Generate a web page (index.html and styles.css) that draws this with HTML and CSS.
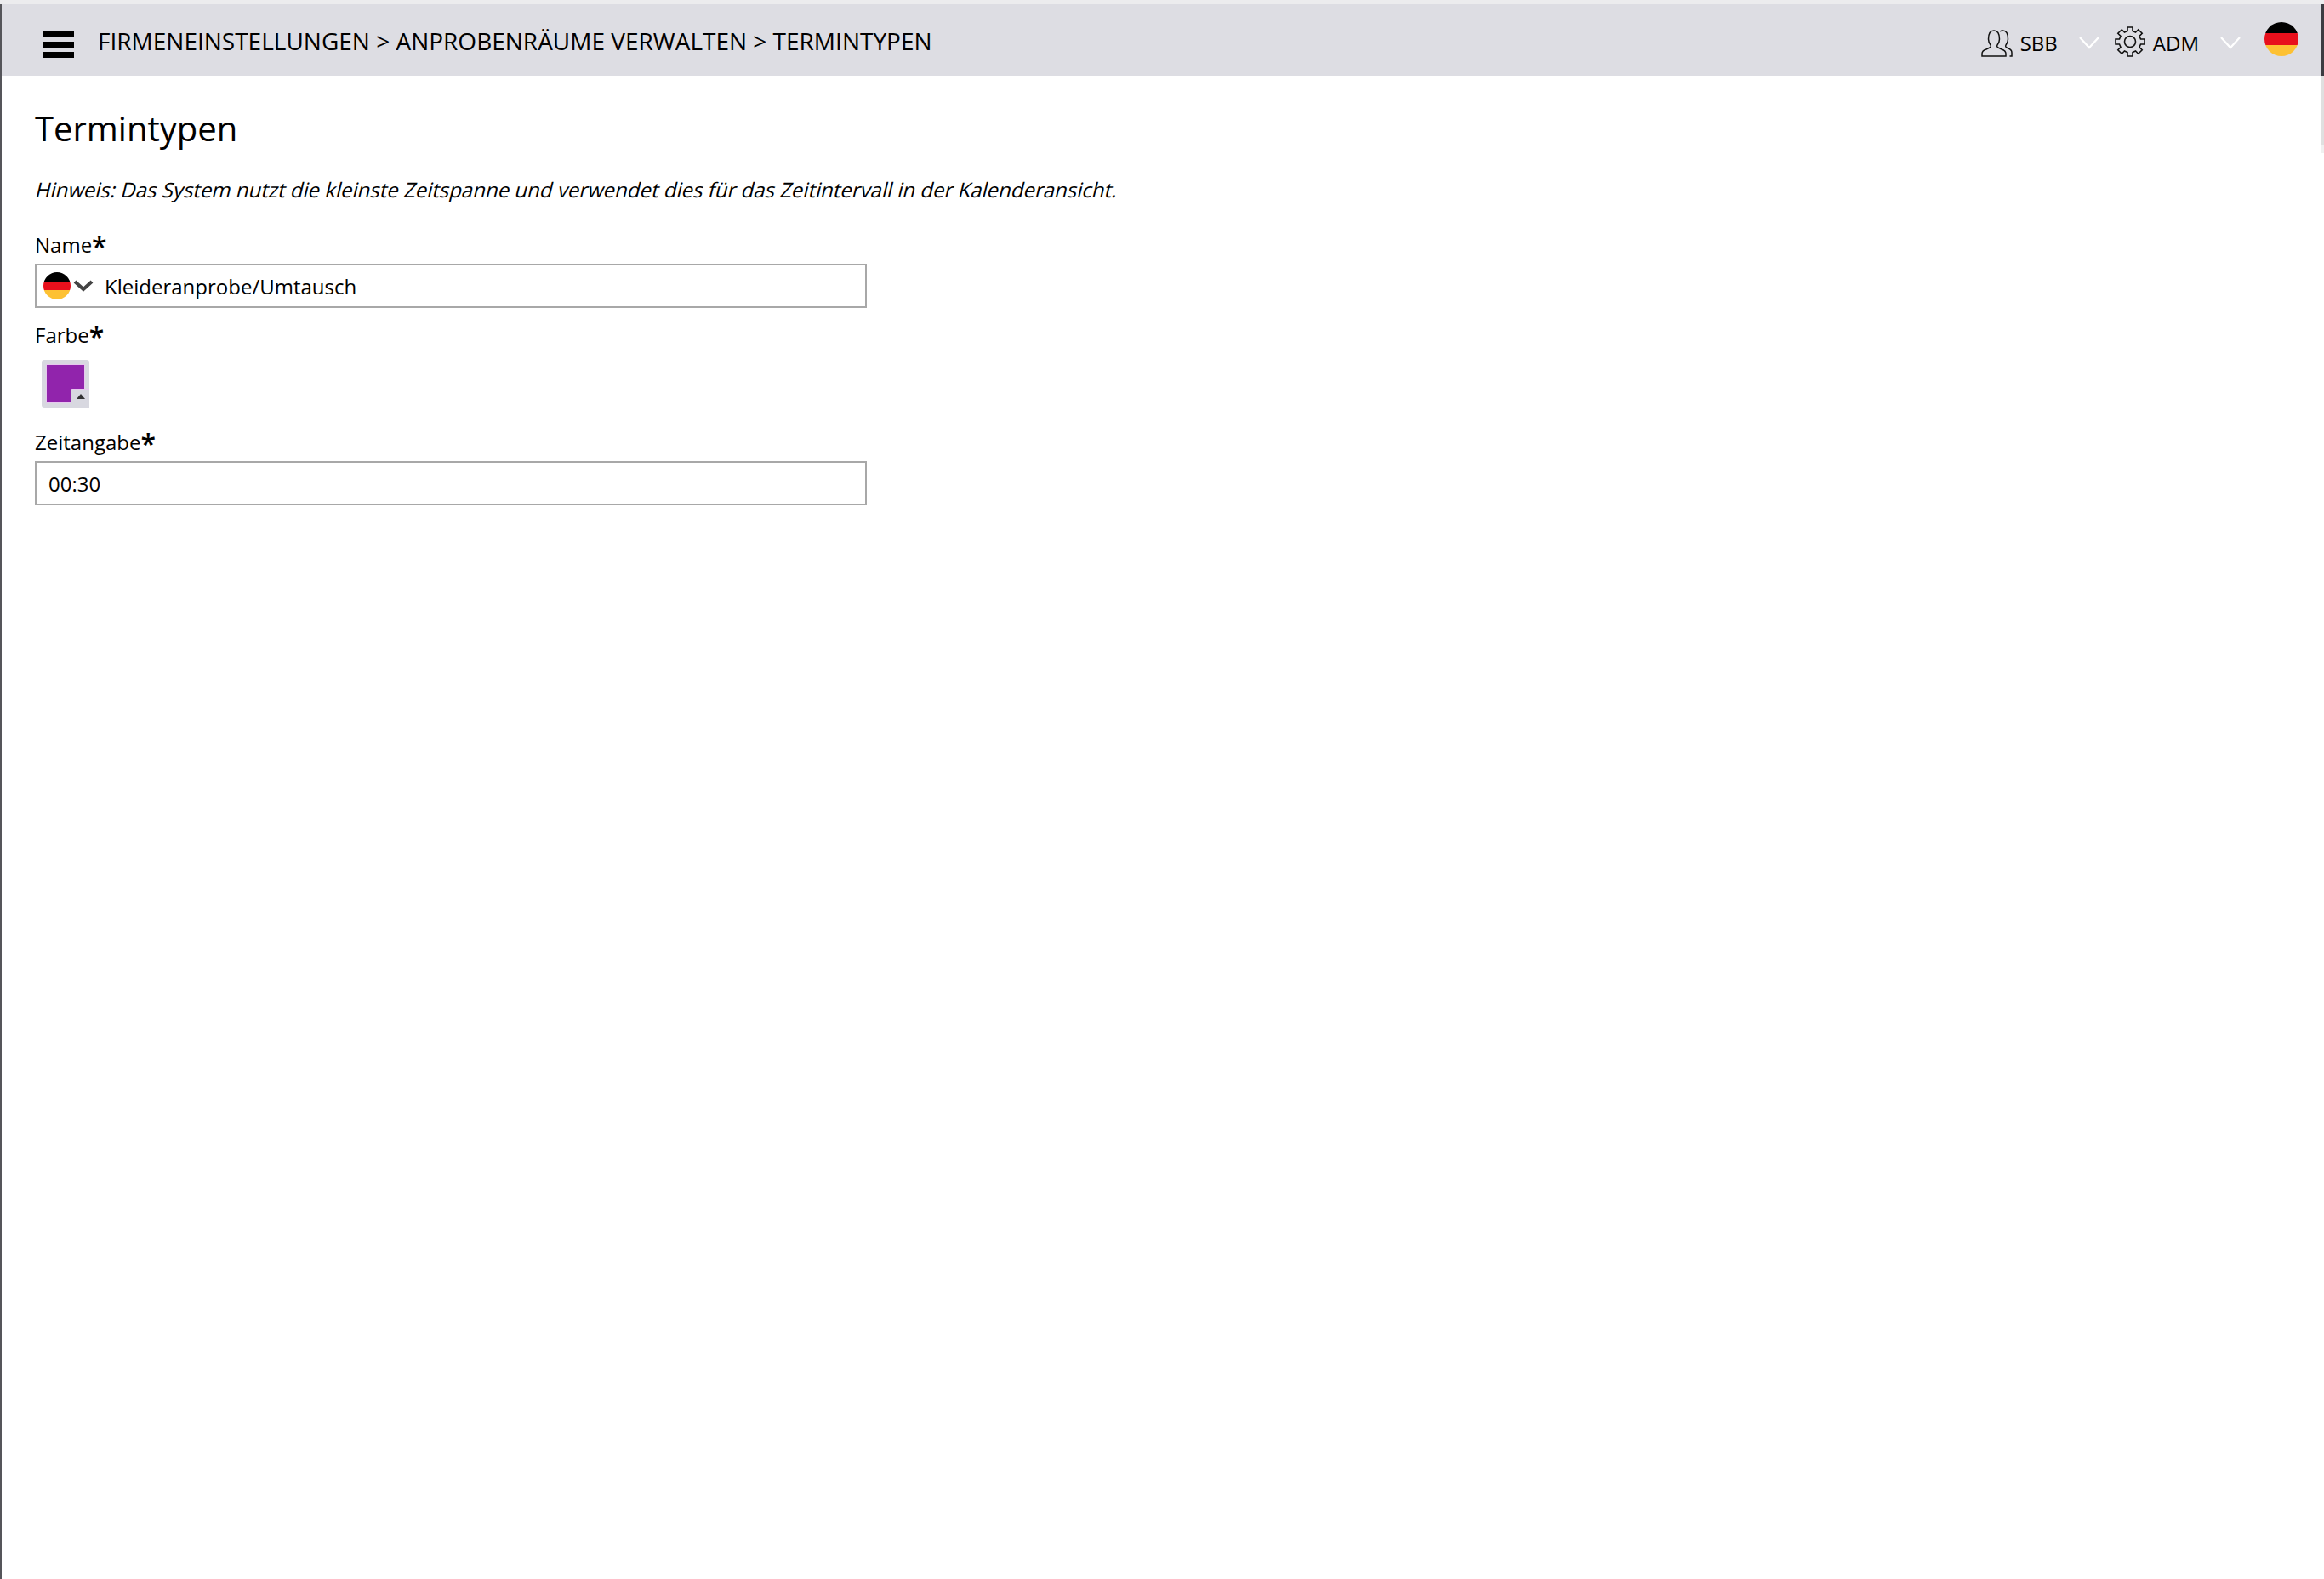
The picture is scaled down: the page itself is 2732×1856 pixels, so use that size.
FILE: index.html
```html
<!DOCTYPE html>
<html lang="de">
<head>
    <meta charset="UTF-8">
    <title>Termintypen</title>
    <link rel="stylesheet" href="styles.css">
</head>
<body>
    <div id="top-strip"></div>
    <div id="page">
        <!-- Top bar -->
        <div id="top-bar">
            <div class="hamburger"><span></span><span></span><span></span></div>
            <div id="breadcrumb">FIRMENEINSTELLUNGEN &gt; ANPROBENRÄUME VERWALTEN &gt; TERMINTYPEN</div>
            <div id="top-menu">
                <svg class="icon-users" viewBox="0 0 37 32" fill="none" stroke="#111" stroke-width="1.500">
                    <path d="M1 31v-3c0-3 2-4 5-5l4-2c1.500-.7 1.500-2 1-3-1.500-2-2.500-4-2.500-7C8.500 6 10 1 15 1s6.500 5 6.500 10c0 3-1 5-2.500 7-.5 1-.5 2.300 1 3l4 2c3 1 5 2 5 5v3z"/>
                    <path d="M22 2c1-.7 2-1 3.500-1 5 0 6 5 6 10 0 3-1 5-2.500 7-.5 1-.5 2.300 1 3l2 1c3 1 4 2.500 4 5v4h-2.500"/>
                </svg>
                <span class="menu-label">SBB</span>
                <svg class="chevron-light" viewBox="0 0 24 15" fill="none" stroke="#fff" stroke-width="2.200"><path d="M1 1l11 12L23 1"/></svg>
                <svg class="icon-gear" viewBox="0 0 36 36" fill="none" stroke="#111" stroke-width="1.600">
                    <circle cx="18" cy="18" r="6.500"/>
                    <path d="M15 1h6v4.500l3.500 1.500 3.200-3.200 4.500 4.500-3.200 3.200 1.500 3.500H35v6h-4.500L29 24.500l3.200 3.200-4.500 4.500-3.200-3.200-3.500 1.500V35h-6v-4.500L11.500 29l-3.200 3.200-4.500-4.500L7 24.500 5.500 21H1v-6h4.500L7 11.500 3.800 8.300l4.500-4.500L11.500 7 15 5.500z"/>
                </svg>
                <span class="menu-label">ADM</span>
                <svg class="chevron-light" viewBox="0 0 24 15" fill="none" stroke="#fff" stroke-width="2.200"><path d="M1 1l11 12L23 1"/></svg>
                <div class="flag flag-large"></div>
            </div>
        </div>

        <!-- Form -->
        <div id="content">
            <h1>Termintypen</h1>
            <p class="hint">Hinweis: Das System nutzt die kleinste Zeitspanne und verwendet dies für das Zeitintervall in der Kalenderansicht.</p>

            <label class="field-label">Name<span class="required">*</span></label>
            <div class="text-field name-field">
                <div class="flag flag-small"></div>
                <svg class="chevron-dark" viewBox="0 0 24 14" fill="none" stroke="#444" stroke-width="4"><path d="M2 2l10 9 10-9"/></svg>
                <span class="field-value name-value">Kleideranprobe/Umtausch</span>
            </div>

            <label class="field-label">Farbe<span class="required">*</span></label>
            <div class="color-picker">
                <div class="color-swatch"></div>
                <div class="color-corner"><div class="color-arrow"></div></div>
            </div>

            <label class="field-label">Zeitangabe<span class="required">*</span></label>
            <div class="text-field">
                <span class="field-value">00:30</span>
            </div>
        </div>

        <div id="scroll-thumb"></div>
    </div>
</body>
</html>
```

FILE: styles.css
```css
* {
    box-sizing: border-box;
    margin: 0;
    padding: 0;
}

html, body {
    height: 100%;
}

body {
    font-family: "Open Sans", sans-serif;
    color: #000;
    background-color: #fff;
    display: flex;
    flex-direction: column;
    overflow: hidden;
}

#top-strip {
    height: 5px;
    background-color: #ececee;
    flex-shrink: 0;
}

#page {
    flex: 1;
    border-left: 2px solid #55555a;
    display: flex;
    flex-direction: column;
    position: relative;
}

/* Top bar */
#top-bar {
    height: 84px;
    padding-top: 3px;
    background-color: #dddde3;
    border-right: 4px solid #3c3c42;
    display: flex;
    align-items: center;
    flex-shrink: 0;
}

.hamburger {
    width: 36px;
    margin-left: 49px;
    margin-top: 7px;
    display: flex;
    flex-direction: column;
    gap: 5px;
    flex-shrink: 0;
}

.hamburger span {
    display: block;
    height: 7px;
    background-color: #000;
}

#breadcrumb {
    margin-left: 28px;
    margin-top: -2px;
    font-size: 28px;
    white-space: nowrap;
}

#top-menu {
    margin-left: auto;
    margin-top: 3px;
    display: flex;
    align-items: center;
}

.icon-users {
    width: 37px;
    height: 32px;
    margin-top: 2px;
}

.icon-gear {
    width: 36px;
    height: 36px;
    margin-left: 18px;
    margin-top: -2px;
}

.menu-label {
    font-size: 24px;
    margin-left: 9px;
}

.chevron-light {
    width: 24px;
    height: 15px;
    margin-left: 25px;
}

.flag {
    border-radius: 50%;
    background: linear-gradient(#000 0 33.3%, #e8101c 33.3% 66.6%, #fdc133 66.6%);
}

.flag-large {
    width: 40px;
    height: 40px;
    margin-left: 28px;
    margin-right: 26px;
    margin-top: -8px;
}

.flag-small {
    width: 32px;
    height: 32px;
    flex-shrink: 0;
}

/* Scrollbar thumb on the right edge */
#scroll-thumb {
    position: absolute;
    top: 84px;
    right: 0;
    width: 4px;
    height: 91px;
    background-color: #e0e0e0;
    border-bottom: 10px solid #f0f0f0;
}

/* Form */
#content {
    padding: 36px 0 0 39px;
    flex: 1;
}

h1 {
    font-size: 40px;
    font-weight: 400;
    line-height: 52px;
}

/* slanted regular face, the Italic one is narrower than the original */
.hint {
    font-size: 24px;
    line-height: 34px;
    margin-top: 29px;
    margin-bottom: 31px;
    transform: skewX(-14deg);
    transform-origin: 0 70%;
}

.field-label {
    display: block;
    font-size: 24px;
    line-height: 34px;
    margin-bottom: 5px;
}

.required {
    font-size: 32px;
    font-weight: 600;
    line-height: 20px;
    vertical-align: -5px;
}

.text-field {
    width: 978px;
    height: 52px;
    border: 2px solid #a8a8a8;
    display: flex;
    align-items: center;
    padding-left: 14px;
    margin-bottom: 15px;
}

.name-field {
    padding-left: 8px;
}

.field-value {
    font-size: 24px;
}

.chevron-dark {
    width: 24px;
    height: 14px;
    margin-left: 3px;
    flex-shrink: 0;
}

.name-value {
    margin-left: 13px;
}

.color-picker {
    width: 56px;
    height: 56px;
    margin: 12px 0 24px 8px;
    padding: 5px;
    border-radius: 3px;
    background-color: #d8d8e0;
    position: relative;
}

.color-swatch {
    width: 100%;
    height: 100%;
    background-color: #9124ac;
    border: 1px solid #e6c8ee;
}

.color-corner {
    position: absolute;
    right: 0;
    bottom: 0;
    width: 22px;
    height: 22px;
    background-color: #d8d8e0;
    border-top-left-radius: 2px;
    border-top: 1px solid #e6c8ee;
    border-left: 1px solid #e6c8ee;
}

.color-arrow {
    position: absolute;
    left: 6px;
    top: 5px;
    border-left: 5px solid transparent;
    border-right: 5px solid transparent;
    border-bottom: 6px solid #333;
}
```
